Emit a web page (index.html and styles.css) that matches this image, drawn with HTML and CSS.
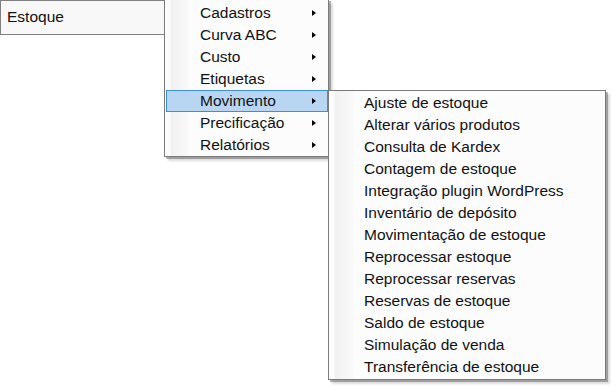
FILE: index.html
```html
<!DOCTYPE html>
<html lang="pt">
<head>
    <meta charset="UTF-8">
    <title>Estoque</title>
    <link rel="stylesheet" href="styles.css">
</head>
<body>
    <div class="menubar">
        <div class="menubar-item">Estoque</div>
    </div>

    <div class="menu menu-main">
        <div class="menu-item has-sub">Cadastros</div>
        <div class="menu-item has-sub">Curva ABC</div>
        <div class="menu-item has-sub">Custo</div>
        <div class="menu-item has-sub">Etiquetas</div>
        <div class="menu-item has-sub active">Movimento</div>
        <div class="menu-item has-sub">Precificação</div>
        <div class="menu-item has-sub">Relatórios</div>
    </div>

    <div class="menu menu-sub">
        <div class="menu-item">Ajuste de estoque</div>
        <div class="menu-item">Alterar vários produtos</div>
        <div class="menu-item">Consulta de Kardex</div>
        <div class="menu-item">Contagem de estoque</div>
        <div class="menu-item">Integração plugin WordPress</div>
        <div class="menu-item">Inventário de depósito</div>
        <div class="menu-item">Movimentação de estoque</div>
        <div class="menu-item">Reprocessar estoque</div>
        <div class="menu-item">Reprocessar reservas</div>
        <div class="menu-item">Reservas de estoque</div>
        <div class="menu-item">Saldo de estoque</div>
        <div class="menu-item">Simulação de venda</div>
        <div class="menu-item">Transferência de estoque</div>
    </div>
</body>
</html>
```

FILE: styles.css
```css
body {
    margin: 0;
    background: #fff;
    font-family: "Liberation Sans", Arial, sans-serif;
    font-size: 15.5px;
    color: #111;
    width: 616px;
    height: 388px;
    overflow: hidden;
    position: relative;
}
.menubar {
    display: flex;
}
.menubar-item {
    width: 158px;
    height: 33px;
    padding-left: 6px;
    line-height: 31px;
    background: #f8f8f8;
    border: 1px solid #808080;
    border-right: none;
}
.menu {
    position: absolute;
    background-color: #fcfcfc;
    background-image: linear-gradient(to right, #fcfcfc 5px, #f1f1f1 6px, #f6f6f6 18px, #fafafa 24px, #fcfcfc 25px);
    border: 1px solid #7a7a7a;
    box-shadow: 2px 2px 0 rgba(0,0,0,0.28), 4px 4px 2px rgba(0,0,0,0.14);
    padding: 1px;
}
.menu-main {
    left: 164px;
    top: -1px;
    width: 162px;
    padding: 2px 0 0 1px;
}
.menu-sub {
    left: 328px;
    top: 90px;
    width: 274px;
}
.menu-item {
    position: relative;
    height: 22px;
    line-height: 22px;
    padding-left: 34px;
    box-sizing: border-box;
    white-space: nowrap;
}
.has-sub::after {
    content: "";
    position: absolute;
    right: 12px;
    top: 8px;
    border-left: 4px solid #000;
    border-top: 3.5px solid transparent;
    border-bottom: 3.5px solid transparent;
}
.active {
    background: #b8d6f2;
    border: 1px solid #3d8ee0;
    line-height: 20px;
    padding-left: 33px;
}
.active::after {
    right: 11px;
    top: 7px;
}
```
